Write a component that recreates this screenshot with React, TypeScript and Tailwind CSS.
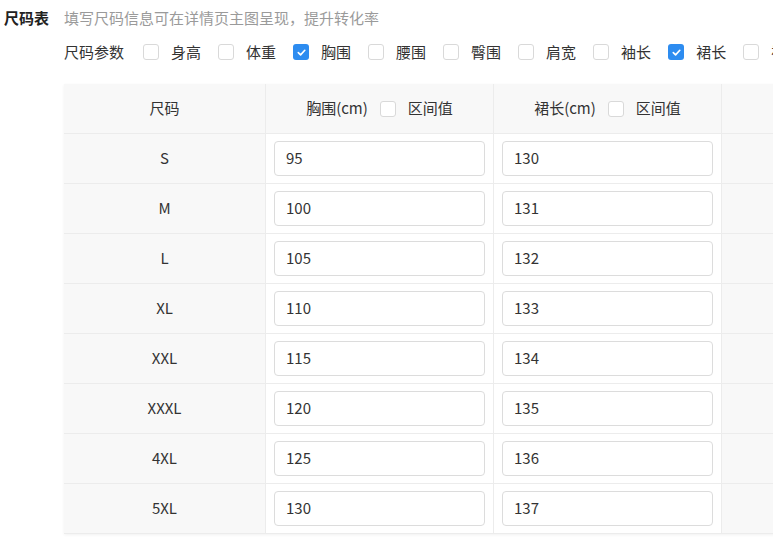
import React from "react";

const params = [
  { label: "身高", checked: false },
  { label: "体重", checked: false },
  { label: "胸围", checked: true },
  { label: "腰围", checked: false },
  { label: "臀围", checked: false },
  { label: "肩宽", checked: false },
  { label: "袖长", checked: false },
  { label: "裙长", checked: true },
  { label: "裤长", checked: false },
];

const rows = [
  { size: "S", chest: "95", length: "130" },
  { size: "M", chest: "100", length: "131" },
  { size: "L", chest: "105", length: "132" },
  { size: "XL", chest: "110", length: "133" },
  { size: "XXL", chest: "115", length: "134" },
  { size: "XXXL", chest: "120", length: "135" },
  { size: "4XL", chest: "125", length: "136" },
  { size: "5XL", chest: "130", length: "137" },
];

function Box({ checked }: { checked: boolean }) {
  return checked ? (
    <span className="flex h-4 w-4 shrink-0 items-center justify-center rounded-[3px] bg-[#2d8cf0]">
      <svg width="11" height="11" viewBox="0 0 12 12" fill="none">
        <path d="M2.5 6.2 L5 8.6 L9.6 3.6" stroke="white" strokeWidth="1.8" strokeLinecap="round" strokeLinejoin="round" />
      </svg>
    </span>
  ) : (
    <span className="block h-4 w-4 shrink-0 rounded-[3px] border border-[#d9d9d9] bg-white" />
  );
}

export default function App() {
  return (
    <div
      className="h-[549px] w-[773px] overflow-hidden bg-white text-[15px] text-[#333]"
      style={{ fontFamily: '"Noto Sans CJK SC", "Microsoft YaHei", sans-serif' }}
    >
      <div className="flex h-[36px] items-center whitespace-nowrap">
        <span className="w-[64px] shrink-0 pl-[4px] font-bold text-[#222]">尺码表</span>
        <span className="text-[#9a9a9a]">填写尺码信息可在详情页主图呈现，提升转化率</span>
      </div>
      <div className="flex h-[32px] items-center whitespace-nowrap pl-[64px]">
        <span className="mr-[19px] shrink-0">尺码参数</span>
        {params.map((p) => (
          <label key={p.label} className="mr-[17px] flex shrink-0 items-center gap-[12px]">
            <Box checked={p.checked} />
            <span>{p.label}</span>
          </label>
        ))}
      </div>
      <div className="ml-[64px] mt-[16px] w-[860px] shadow-[0_1px_3px_rgba(0,0,0,0.06)]">
        <div className="grid h-[50px] grid-cols-[202px_228px_228px_202px] border-b border-[#ececec] bg-[#f8f8f8]">
          <div className="flex items-center justify-center border-r border-[#ececec]">尺码</div>
          <div className="flex items-center justify-center gap-[12px] border-r border-[#ececec]">
            <span>胸围(cm)</span>
            <Box checked={false} />
            <span>区间值</span>
          </div>
          <div className="flex items-center justify-center gap-[12px] border-r border-[#ececec]">
            <span>裙长(cm)</span>
            <Box checked={false} />
            <span>区间值</span>
          </div>
          <div />
        </div>
        {rows.map((r) => (
          <div
            key={r.size}
            className="grid h-[50px] grid-cols-[202px_228px_228px_202px] border-b border-[#ececec]"
          >
            <div className="flex items-center justify-center border-r border-[#ececec] bg-[#f8f8f8]">{r.size}</div>
            <div className="flex items-center border-r border-[#ececec] bg-white px-[8px]">
              <div className="flex h-[35px] w-full items-center rounded-[4px] border border-[#dcdcdc] pl-[11px]">{r.chest}</div>
            </div>
            <div className="flex items-center border-r border-[#ececec] bg-white px-[8px]">
              <div className="flex h-[35px] w-full items-center rounded-[4px] border border-[#dcdcdc] pl-[11px]">{r.length}</div>
            </div>
            <div className="bg-[#f8f8f8]" />
          </div>
        ))}
      </div>
    </div>
  );
}
